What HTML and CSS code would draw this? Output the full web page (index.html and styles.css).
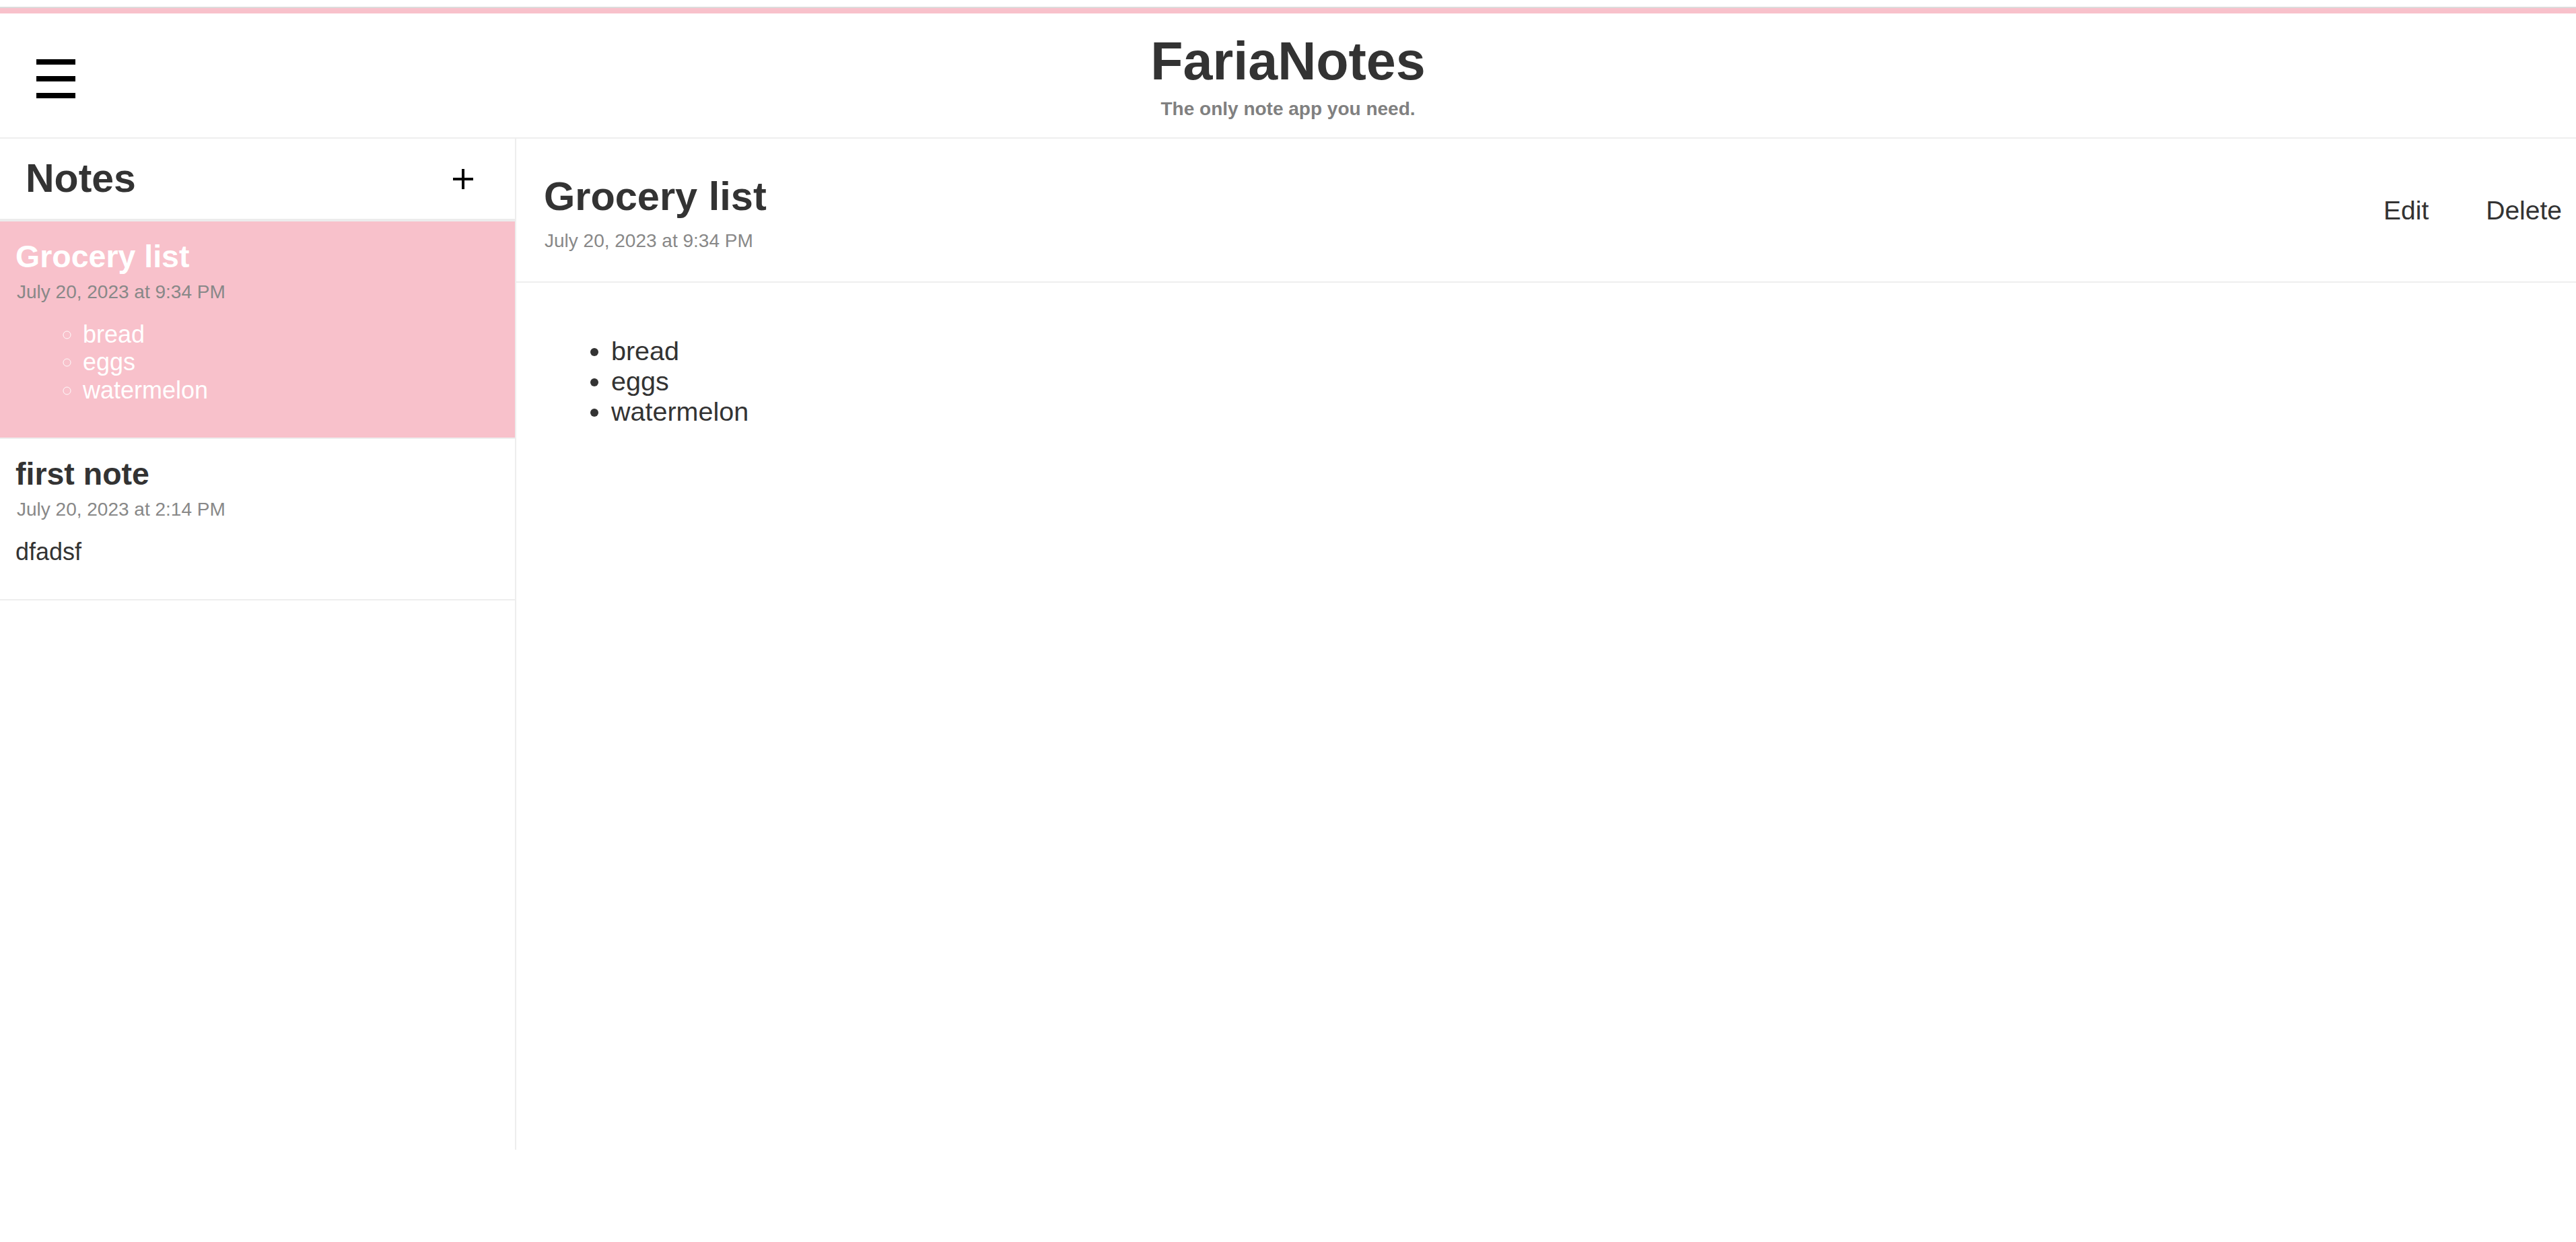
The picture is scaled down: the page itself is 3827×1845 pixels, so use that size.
FILE: index.html
```html
<!DOCTYPE html>
<html lang="en">
<head>
<meta charset="utf-8">
<title>FariaNotes</title>
<link rel="stylesheet" href="styles.css">
</head>
<body>
<div class="stripe"></div>
<header class="topbar">
  <button class="menu" aria-label="Menu"><span></span><span></span><span></span></button>
  <div class="brand">
    <h1 class="brand-title">FariaNotes</h1>
    <p class="brand-sub">The only note app you need.</p>
  </div>
  <div class="topbar-spacer"></div>
</header>
<div class="layout">
  <aside class="sidebar">
    <div class="sidebar-head">
      <h2 class="sidebar-title">Notes</h2>
      <button class="add" aria-label="Add note">
        <svg width="30" height="30" viewBox="0 0 30 30"><path d="M15 0V30M0 15H30" stroke="#000" stroke-width="4"/></svg>
      </button>
    </div>
    <div class="note note-active">
      <h3 class="note-title">Grocery list</h3>
      <div class="note-date">July 20, 2023 at 9:34 PM</div>
      <ul class="note-list">
        <li>bread</li>
        <li>eggs</li>
        <li>watermelon</li>
      </ul>
    </div>
    <div class="note">
      <h3 class="note-title">first note</h3>
      <div class="note-date">July 20, 2023 at 2:14 PM</div>
      <p class="note-text">dfadsf</p>
    </div>
  </aside>
  <main class="viewer">
    <div class="viewer-head">
      <div class="viewer-info">
        <h2 class="viewer-title">Grocery list</h2>
        <div class="viewer-date">July 20, 2023 at 9:34 PM</div>
      </div>
      <div class="viewer-actions">
        <button class="action">Edit</button>
        <button class="action">Delete</button>
      </div>
    </div>
    <div class="viewer-body">
      <ul class="viewer-list">
        <li>bread</li>
        <li>eggs</li>
        <li>watermelon</li>
      </ul>
    </div>
  </main>
</div>
</body>
</html>
```
FILE: styles.css
```css
html, body {
  margin: 0;
  padding: 0;
  background: #fff;
}
body {
  font-family: "Liberation Sans", Arial, sans-serif;
  color: #333;
}
button {
  font-family: inherit;
  background: none;
  border: 0;
  padding: 0;
  margin: 0;
  cursor: pointer;
}
.stripe {
  margin-top: 10px;
  border-top: 2px solid #dcdcdc;
  height: 8px;
  background: #f8c1cb;
}
.topbar {
  display: grid;
  grid-template-columns: 1fr auto 1fr;
  align-items: center;
  padding: 26px 0;
  border-bottom: 2px solid #eeeeee;
}
.menu {
  justify-self: start;
  margin-left: 54px;
  margin-top: 10px;
  display: flex;
  flex-direction: column;
  gap: 17px;
}
.menu span {
  display: block;
  width: 58px;
  height: 8px;
  background: #000;
}
.brand {
  text-align: center;
}
.brand-title {
  margin: 0;
  font-size: 79px;
  line-height: 90px;
  font-weight: bold;
  color: #333;
}
.brand-sub {
  margin: 10px 0 0;
  font-size: 28px;
  line-height: 32px;
  font-weight: bold;
  color: #808080;
}
.layout {
  display: flex;
  height: 1502px;
}
.sidebar {
  width: 765px;
  flex-shrink: 0;
  border-right: 2px solid #eeeeee;
}
.sidebar-head {
  height: 119px;
  display: flex;
  align-items: center;
  justify-content: space-between;
  padding: 0 62px 0 38px;
  border-bottom: 4px solid #ececec;
}
.sidebar-title {
  margin: 0;
  font-size: 59px;
  line-height: 67px;
  font-weight: bold;
  color: #333;
}
.add {
  display: flex;
  width: 30px;
  height: 30px;
}
.note {
  padding: 26px 23px 24px;
  border-bottom: 2px solid #eeeeee;
}
.note-active {
  background: #f8c1cb;
}
.note-title {
  margin: 0;
  font-size: 46.5px;
  line-height: 52.6px;
  font-weight: bold;
  color: #333;
}
.note-active .note-title {
  color: #fff;
}
.note-date {
  margin-top: 10px;
  font-size: 28px;
  line-height: 32.2px;
  color: #888;
  padding-left: 2px;
}
.note-list {
  margin: 26px 0;
  padding-left: 100px;
  list-style-type: circle;
  font-size: 36px;
  line-height: 41.4px;
  color: #fff;
}
.note-text {
  margin: 26px 0;
  font-size: 36px;
  line-height: 41.4px;
  color: #333;
}
.viewer {
  flex: 1;
  min-width: 0;
}
.viewer-head {
  display: flex;
  justify-content: space-between;
  align-items: flex-start;
  padding: 52px 21px 43px 41px;
  border-bottom: 2px solid #eeeeee;
}
.viewer-title {
  margin: 0;
  font-size: 59.5px;
  line-height: 67.4px;
  font-weight: bold;
  color: #333;
}
.viewer-date {
  margin-top: 17px;
  font-size: 28px;
  line-height: 32.2px;
  color: #888;
  padding-left: 1px;
}
.viewer-actions {
  display: flex;
  gap: 85px;
  margin-top: 32px;
}
.action {
  font-size: 39px;
  line-height: 45px;
  color: #333;
}
.viewer-body {
  padding: 41px;
}
.viewer-list {
  margin: 38px 0;
  padding-left: 100px;
  font-size: 39.5px;
  line-height: 45px;
  color: #333;
}
```
